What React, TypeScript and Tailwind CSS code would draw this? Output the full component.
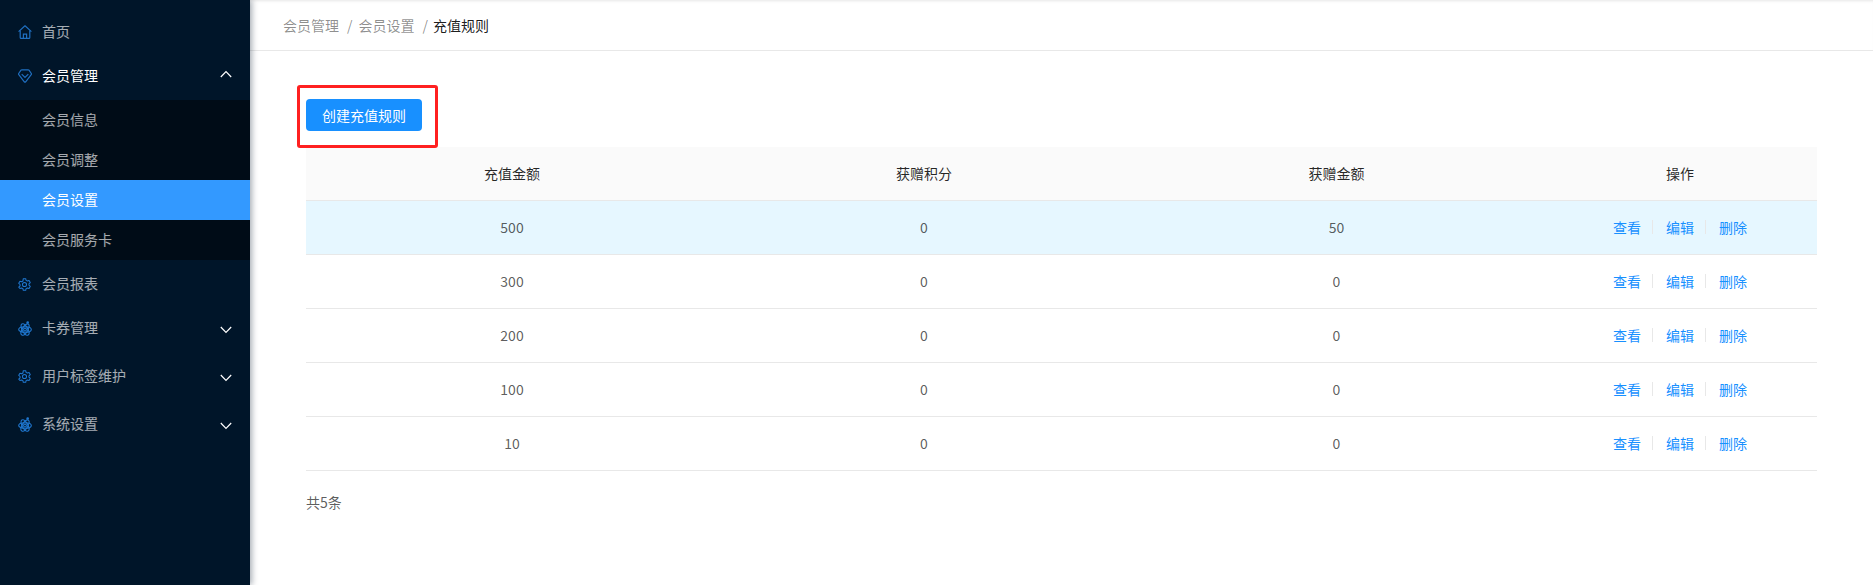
import React from "react";

function HomeIcon() {
  return (
    <svg viewBox="0 0 14 14" className="w-[14px] h-[14px] text-[#1f6fc0]" fill="none" stroke="currentColor" strokeWidth="1.2">
      <path d="M.6 6.600 7 .8l6.400 5.800" strokeLinejoin="round" />
      <path d="M2.200 5.400v7.100a.9.9 0 0 0 .9.9h7.800a.9.900 0 0 0 .9-.9V5.400" />
      <path d="M5.400 13.400V9.200h3.200v4.200" />
    </svg>
  );
}

function HeartIcon() {
  return (
    <svg viewBox="0 0 14 14" className="w-[14px] h-[14px] text-[#1f6fc0]" fill="none" stroke="currentColor" strokeWidth="1.2">
      <path d="M3.800.8h6.400a1 1 0 0 1 .8.4l2.300 3.300a1 1 0 0 1-.1 1.200L7.700 12.800a1 1 0 0 1-1.400 0L.8 5.700a1 1 0 0 1-.1-1.200L3 1.200a1 1 0 0 1 .8-.4z" />
      <path d="M3.700 5.200 7 8.500l3.300-3.300" />
    </svg>
  );
}

function GearIcon() {
  return (
    <svg viewBox="0 0 14 14" className="w-[13px] h-[13px] text-[#1f78d1]" fill="none" stroke="currentColor" strokeWidth="1.100">
      <path d="M5.700.7h2.600l.4 1.800 1.400.8 1.800-.6 1.300 2.200-1.400 1.300v1.600l1.400 1.300-1.300 2.200-1.800-.6-1.400.8-.4 1.800H5.700l-.4-1.800-1.400-.8-1.800.6L.8 9.900l1.400-1.300V7L.8 5.700l1.300-2.200 1.800.6 1.400-.8z" strokeLinejoin="round" />
      <circle cx="7" cy="7" r="2.200" />
    </svg>
  );
}

function AtomIcon() {
  return (
    <svg viewBox="0 0 14 15" className="w-[14px] h-[15px] text-[#1f78d1]" fill="none" stroke="currentColor" strokeWidth="1.100">
      <ellipse cx="7" cy="8.500" rx="6.300" ry="2.800" />
      <ellipse cx="7" cy="8.500" rx="6.300" ry="2.800" transform="rotate(60 7 8.500)" />
      <ellipse cx="7" cy="8.500" rx="6.300" ry="2.800" transform="rotate(120 7 8.500)" />
      <circle cx="7" cy="8.500" r="1.400" />
      <circle cx="9.700" cy="1.500" r="1.300" fill="currentColor" stroke="none" />
    </svg>
  );
}

function Chevron({ up }: { up?: boolean }) {
  return (
    <svg viewBox="0 0 12 8" className={`w-3 h-2 text-white ${up ? "mb-1" : "mt-1"}`} fill="none" stroke="currentColor" strokeWidth="1.200">
      <path d={up ? "M.8 7 6 1.500 11.200 7" : "M.8 1 6 6.500 11.200 1"} />
    </svg>
  );
}

const rows = [
  { amount: 500, points: 0, gift: 50 },
  { amount: 300, points: 0, gift: 0 },
  { amount: 200, points: 0, gift: 0 },
  { amount: 100, points: 0, gift: 0 },
  { amount: 10, points: 0, gift: 0 },
];

function NavItem({ icon, label, mt, open, arrow }: { icon: React.ReactNode; label: string; mt: string; open?: boolean; arrow?: boolean }) {
  return (
    <div className={`h-10 flex items-center pl-[18px] pr-[18px] ${mt} ${open ? "text-white" : "text-white/65"}`}>
      <span className="w-6 flex justify-start">{icon}</span>
      <span className="flex-1 pb-[2px]">{label}</span>
      {arrow && <Chevron up={open} />}
    </div>
  );
}

export default function App() {
  return (
    <div className="flex h-[585px] overflow-hidden bg-white text-sm font-['Noto_Sans_CJK_SC','Noto_Sans',sans-serif]">
      <aside className="w-[250px] shrink-0 bg-[#001529] pt-3 shadow-[2px_0_6px_rgba(0,21,41,0.35)] z-10">
        <NavItem icon={<HomeIcon />} label="首页" mt="" />
        <NavItem icon={<HeartIcon />} label="会员管理" mt="mt-1" open arrow />
        <div className="mt-1 bg-[#000c17] text-white/65">
          <div className="h-10 flex items-center pl-[42px] pb-[2px]">会员信息</div>
          <div className="h-10 flex items-center pl-[42px] pb-[2px]">会员调整</div>
          <div className="h-10 flex items-center pl-[42px] pb-[2px] bg-[#3399ff] text-white">会员设置</div>
          <div className="h-10 flex items-center pl-[42px] pb-[2px]">会员服务卡</div>
        </div>
        <NavItem icon={<GearIcon />} label="会员报表" mt="mt-1" />
        <NavItem icon={<AtomIcon />} label="卡券管理" mt="mt-1" arrow />
        <NavItem icon={<GearIcon />} label="用户标签维护" mt="mt-2" arrow />
        <NavItem icon={<AtomIcon />} label="系统设置" mt="mt-2" arrow />
      </aside>

      <main className="flex-1 min-w-0">
        <div className="h-[51px] border-b border-[#e8e8e8] shadow-[inset_0_3px_3px_-2px_rgba(0,0,0,0.1)] flex items-center pl-[33px] text-black/45">
          <span>会员管理</span>
          <span className="ml-2 mr-[6px]">/</span>
          <span>会员设置</span>
          <span className="ml-2 mr-[5px]">/</span>
          <span className="text-black/90">充值规则</span>
        </div>

        <div className="pl-[56px] pr-[56px] pt-[48px]">
          <div className="relative w-fit">
            <button className="h-8 w-[116px] rounded bg-[#1890ff] text-white">创建充值规则</button>
            <div className="absolute -left-[9px] -top-[14px] w-[141px] h-[63px] border-[3px] border-[#ff2020] rounded-[3px]" />
          </div>

          <table className="w-full mt-4 table-fixed text-center text-black/65">
            <thead>
              <tr className="h-[53px] bg-[#fafafa] border-b border-[#e8e8e8] text-black/85">
                <th className="w-[412px] font-normal">充值金额</th>
                <th className="w-[412px] font-normal">获赠积分</th>
                <th className="w-[413px] font-normal">获赠金额</th>
                <th className="font-normal">操作</th>
              </tr>
            </thead>
            <tbody>
              {rows.map((r, i) => (
                <tr key={r.amount} className={`h-[54px] border-b border-[#e8e8e8] ${i === 0 ? "bg-[#e6f7ff]" : ""}`}>
                  <td>{r.amount}</td>
                  <td>{r.points}</td>
                  <td>{r.gift}</td>
                  <td>
                    <div className="flex items-center justify-center text-[#1890ff]">
                      <span>查看</span>
                      <span className="w-px h-[14px] bg-[#e8e8e8] ml-[11px] mr-[13px]" />
                      <span>编辑</span>
                      <span className="w-px h-[14px] bg-[#e8e8e8] ml-[11px] mr-[13px]" />
                      <span>删除</span>
                    </div>
                  </td>
                </tr>
              ))}
            </tbody>
          </table>

          <div className="mt-[21px] text-black/65">共5条</div>
        </div>
      </main>
    </div>
  );
}
